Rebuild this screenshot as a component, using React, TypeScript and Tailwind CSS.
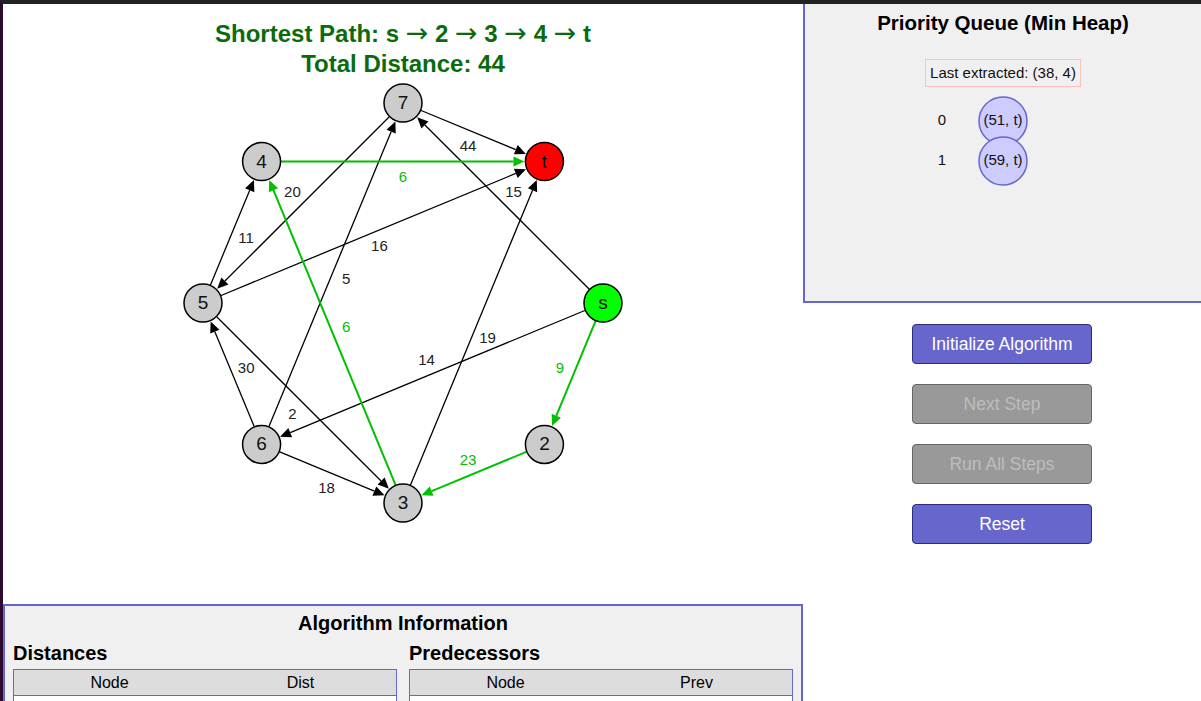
import React from "react";

type GraphNode = { id: string; x: number; y: number; fill: string };
type Edge = { from: string; to: string; w: number; path?: boolean };

const CX = 400;
const CY = 299;
const R = 200;
const NODE_R = 19;

// ring layout, angle in degrees
const ring: [string, number, string][] = [
  ["7", -90, "#cccccc"],
  ["t", -45, "#ff0000"],
  ["s", 0, "#00ff00"],
  ["2", 45, "#cccccc"],
  ["3", 90, "#cccccc"],
  ["6", 135, "#cccccc"],
  ["5", 180, "#cccccc"],
  ["4", 225, "#cccccc"],
];

const nodes: Record<string, GraphNode> = {};
ring.forEach(([id, deg, fill]) => {
  const a = (deg * Math.PI) / 180;
  nodes[id] = { id, x: CX + R * Math.cos(a), y: CY + R * Math.sin(a), fill };
});

const edges: Edge[] = [
  { from: "7", to: "t", w: 44 },
  { from: "5", to: "4", w: 11 },
  { from: "7", to: "5", w: 20 },
  { from: "5", to: "t", w: 16 },
  { from: "6", to: "7", w: 5 },
  { from: "s", to: "7", w: 15 },
  { from: "3", to: "t", w: 19 },
  { from: "s", to: "6", w: 14 },
  { from: "6", to: "5", w: 30 },
  { from: "5", to: "3", w: 2 },
  { from: "6", to: "3", w: 18 },
  { from: "4", to: "t", w: 6, path: true },
  { from: "3", to: "4", w: 6, path: true },
  { from: "s", to: "2", w: 9, path: true },
  { from: "2", to: "3", w: 23, path: true },
];

const GREEN = "#00c000";

function EdgeView({ e }: { e: Edge }) {
  const a = nodes[e.from];
  const b = nodes[e.to];
  const dx = b.x - a.x;
  const dy = b.y - a.y;
  const len = Math.hypot(dx, dy);
  const ux = dx / len;
  const uy = dy / len;
  const px = -uy;
  const py = ux;
  const color = e.path ? GREEN : "#000000";

  const sx = a.x + ux * NODE_R;
  const sy = a.y + uy * NODE_R;
  const tipX = b.x - ux * (NODE_R + 1);
  const tipY = b.y - uy * (NODE_R + 1);
  const baseX = tipX - ux * 11;
  const baseY = tipY - uy * 11;
  const head = `${tipX},${tipY} ${baseX + px * 5},${baseY + py * 5} ${baseX - px * 5},${baseY - py * 5}`;

  const lx = (a.x + b.x) / 2 + px * 15;
  const ly = (a.y + b.y) / 2 + py * 15;

  return (
    <g>
      <line
        x1={sx}
        y1={sy}
        x2={baseX}
        y2={baseY}
        stroke={color}
        strokeWidth={e.path ? 2 : 1.3}
      />
      <polygon points={head} fill={color} />
      <text
        x={lx}
        y={ly + 1}
        textAnchor="middle"
        dominantBaseline="middle"
        fontSize={15}
        fill={e.path ? GREEN : "#222222"}
      >
        {e.w}
      </text>
    </g>
  );
}

function Arrow() {
  return (
    <tspan fontWeight="normal" fontSize={27} className="font-['DejaVu_Sans',sans-serif]">
      →
    </tspan>
  );
}

function GraphCanvas() {
  return (
    <svg width={800} height={600} className="block shrink-0 font-['Liberation_Sans',sans-serif]">
      <text x={400} y={38} textAnchor="middle" fontSize={24} fontWeight="bold" fill="#0b6b0b">
        Shortest Path: s <Arrow /> 2 <Arrow /> 3 <Arrow /> 4 <Arrow /> t
      </text>
      <text x={400} y={68} textAnchor="middle" fontSize={24} fontWeight="bold" fill="#0b6b0b">
        Total Distance: 44
      </text>
      {edges.map((e) => (
        <EdgeView key={e.from + e.to} e={e} />
      ))}
      {Object.values(nodes).map((n) => (
        <g key={n.id}>
          <circle cx={n.x} cy={n.y} r={NODE_R} fill={n.fill} stroke="#000" strokeWidth={1.5} />
          <text
            x={n.x}
            y={n.y + 1}
            textAnchor="middle"
            dominantBaseline="middle"
            fontSize={19}
            fill="#111"
          >
            {n.id}
          </text>
        </g>
      ))}
    </svg>
  );
}

const heap = ["(51, t)", "(59, t)"];

function PriorityQueue() {
  return (
    <div className="h-[299px] shrink-0 bg-[#f0f0f0] border-l-2 border-b-2 border-[#6666cc] flex flex-col items-center pt-[7px]">
      <h2 className="text-[20.5px] leading-[24px] font-bold text-black">Priority Queue (Min Heap)</h2>
      <div className="mt-[24px] border border-[#ffc0c0] h-[28px] px-[4px] flex items-center text-[15px] text-[#111]">
        Last extracted: (38, 4)
      </div>
      <svg width={396} height={100} className="block mt-[3px]">
        {heap.map((item, i) => (
          <g key={i}>
            <text x={137} y={31 + i * 40} textAnchor="middle" dominantBaseline="middle" fontSize={15} fill="#111">
              {i}
            </text>
            <circle cx={198} cy={31 + i * 40} r={24} fill="#ccccff" stroke="#6666cc" strokeWidth={1.5} />
            <text x={198} y={31 + i * 40} textAnchor="middle" dominantBaseline="middle" fontSize={15} fill="#111">
              {item}
            </text>
          </g>
        ))}
      </svg>
    </div>
  );
}

function ControlButton(props: { label: string; disabled?: boolean }) {
  const { label, disabled } = props;
  return (
    <button
      disabled={disabled}
      className={
        disabled
          ? "w-[180px] h-[40px] rounded-[4px] border border-[#666666] bg-[#999999] text-[17.5px] text-[#bdbdbd]"
          : "w-[180px] h-[40px] rounded-[4px] border border-[#2e2e80] bg-[#6666cc] text-[17.5px] text-white"
      }
    >
      {label}
    </button>
  );
}

function InfoTable(props: { title: string; cols: [string, string] }) {
  return (
    <div className="flex flex-col">
      <h3 className="text-[20px] leading-[24px] font-bold text-black">{props.title}</h3>
      <table className="mt-[4px] w-full border-collapse border border-[#6666cc] text-[16px]">
        <thead>
          <tr className="bg-[#dddddd] h-[26px]">
            <th className="font-normal w-1/2">{props.cols[0]}</th>
            <th className="font-normal w-1/2">{props.cols[1]}</th>
          </tr>
        </thead>
        <tbody className="bg-white">
          <tr className="h-[24px] border-t border-[#6666cc]">
            <td />
            <td />
          </tr>
        </tbody>
      </table>
    </div>
  );
}

export default function App() {
  return (
    <div className="h-[701px] overflow-hidden bg-white border-t-4 border-t-[#222222] border-l-[3px] border-l-[#2d0b2d] flex font-['Liberation_Sans',sans-serif]">
      <div className="w-[800px] shrink-0 flex flex-col">
        <GraphCanvas />
        <div className="shrink-0 bg-[#f0f0f0] border-2 border-[#6666cc] px-[8px] pt-[5px] pb-3">
          <h2 className="text-center text-[20px] leading-[24px] font-bold text-black">Algorithm Information</h2>
          <div className="grid grid-cols-2 gap-3 mt-[6px]">
            <InfoTable title="Distances" cols={["Node", "Dist"]} />
            <InfoTable title="Predecessors" cols={["Node", "Prev"]} />
          </div>
        </div>
      </div>
      <div className="flex-1 flex flex-col">
        <PriorityQueue />
        <div className="flex flex-col items-center gap-5 pt-[21px]">
          <ControlButton label="Initialize Algorithm" />
          <ControlButton label="Next Step" disabled />
          <ControlButton label="Run All Steps" disabled />
          <ControlButton label="Reset" />
        </div>
      </div>
    </div>
  );
}
